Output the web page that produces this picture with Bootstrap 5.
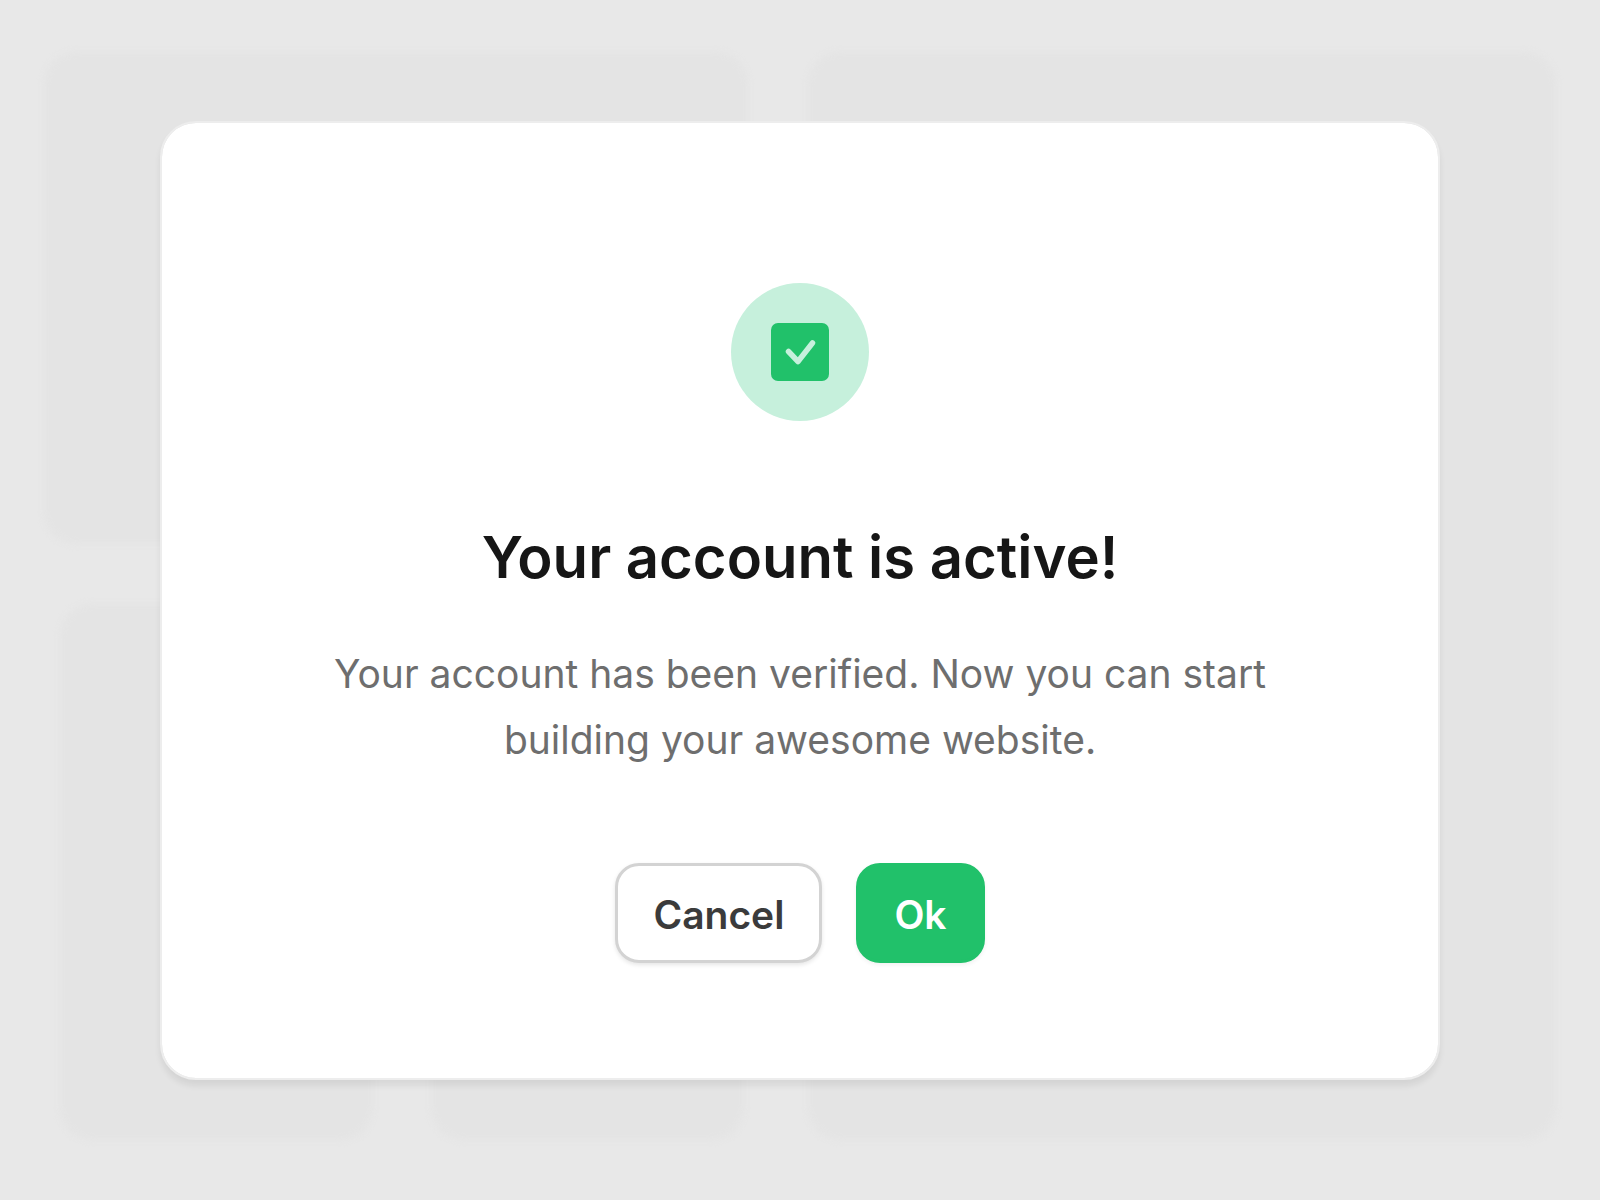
<!DOCTYPE html>
<html lang="en">
<head>
<meta charset="utf-8">
<meta name="viewport" content="width=device-width, initial-scale=1">
<title>Account active</title>
<link href="https://cdn.jsdelivr.net/npm/bootstrap@5.3.0/dist/css/bootstrap.min.css" rel="stylesheet">
<style>
  body { font-family: Inter, "Liberation Sans", sans-serif; background: #e8e8e8; }
  /* faded page panels behind the dialog */
  .backdrop-panels { padding: 52px 44px 60px; gap: 60px; filter: blur(3px); }
  .panel-box { background: #e4e4e4; border-radius: 32px; }
  .panels-side { flex: 0 0 704px; gap: 60px; }
  .panels-pair { gap: 58px; padding: 0 4px 0 16px; flex: 536 1 0; }
  .panel-top { flex: 492 1 0; }
  .alert-dialog { width: 80%; border: 2px solid #ededed; border-radius: 36px; padding: 160px 160px 115px; box-shadow: 0 6px 6px rgba(0, 0, 0, .07); background-clip: padding-box; }
  .status-icon { width: 138px; height: 138px; background: #c6f0dc; }
  .dialog-title { font-size: 58px; line-height: 72px; font-weight: 600; color: #161616; margin: 100px 0 0; }
  .dialog-text { font-size: 39px; line-height: 66px; color: #6e6e6e; margin: 48px 0 90px; }
  .dialog-btn { --bs-btn-font-size: 39px; --bs-btn-font-weight: 600; --bs-btn-border-width: 3px; --bs-btn-border-radius: 24px; --bs-btn-padding-x: 35px; --bs-btn-padding-y: 17px; --bs-btn-line-height: 60px; padding-top: 19px; padding-bottom: 15px; }
  .btn-cancel { --bs-btn-color: #3b3b3b; --bs-btn-bg: #fff; --bs-btn-border-color: #d3d3d3; --bs-btn-hover-bg: #f6f6f6; --bs-btn-hover-border-color: #c8c8c8; box-shadow: 0 2px 4px rgba(0, 0, 0, .1); }
  .btn-ok { --bs-btn-color: #fff; --bs-btn-bg: #21c16a; --bs-btn-border-color: #21c16a; --bs-btn-hover-color: #fff; --bs-btn-hover-bg: #1dae5f; --bs-btn-hover-border-color: #1dae5f; box-shadow: 0 2px 4px rgba(0, 0, 0, .06); }
  .dialog-actions { gap: 34px; }
</style>
</head>
<body>
<div class="position-relative min-vh-100 d-flex align-items-center justify-content-center overflow-hidden">
  <div class="backdrop-panels position-absolute top-0 start-0 w-100 h-100 d-flex" aria-hidden="true">
    <div class="panels-side d-flex flex-column">
      <div class="panel-box panel-top"></div>
      <div class="panels-pair d-flex">
        <div class="panel-box flex-fill"></div>
        <div class="panel-box flex-fill"></div>
      </div>
    </div>
    <div class="panel-box flex-fill"></div>
  </div>
  <main class="alert-dialog card position-relative text-center align-items-center" role="alertdialog" aria-labelledby="dialogTitle" aria-describedby="dialogText">
    <div class="status-icon rounded-circle d-flex align-items-center justify-content-center">
      <svg width="58" height="58" viewBox="0 0 58 58" aria-hidden="true">
        <rect width="58" height="58" rx="7" fill="#21c16a"/>
        <path d="M17.500 28.500 L27 38.500 L41.500 20" fill="none" stroke="#c6f0dc" stroke-width="5.500" stroke-linecap="round" stroke-linejoin="round"/>
      </svg>
    </div>
    <h1 class="dialog-title" id="dialogTitle">Your account is active!</h1>
    <p class="dialog-text" id="dialogText">Your account has been verified. Now you can start building your awesome website.</p>
    <div class="dialog-actions d-flex justify-content-center">
      <button type="button" class="btn dialog-btn btn-cancel">Cancel</button>
      <button type="button" class="btn dialog-btn btn-ok">Ok</button>
    </div>
  </main>
</div>
<script src="https://cdn.jsdelivr.net/npm/bootstrap@5.3.0/dist/js/bootstrap.bundle.min.js"></script>
</body>
</html>
